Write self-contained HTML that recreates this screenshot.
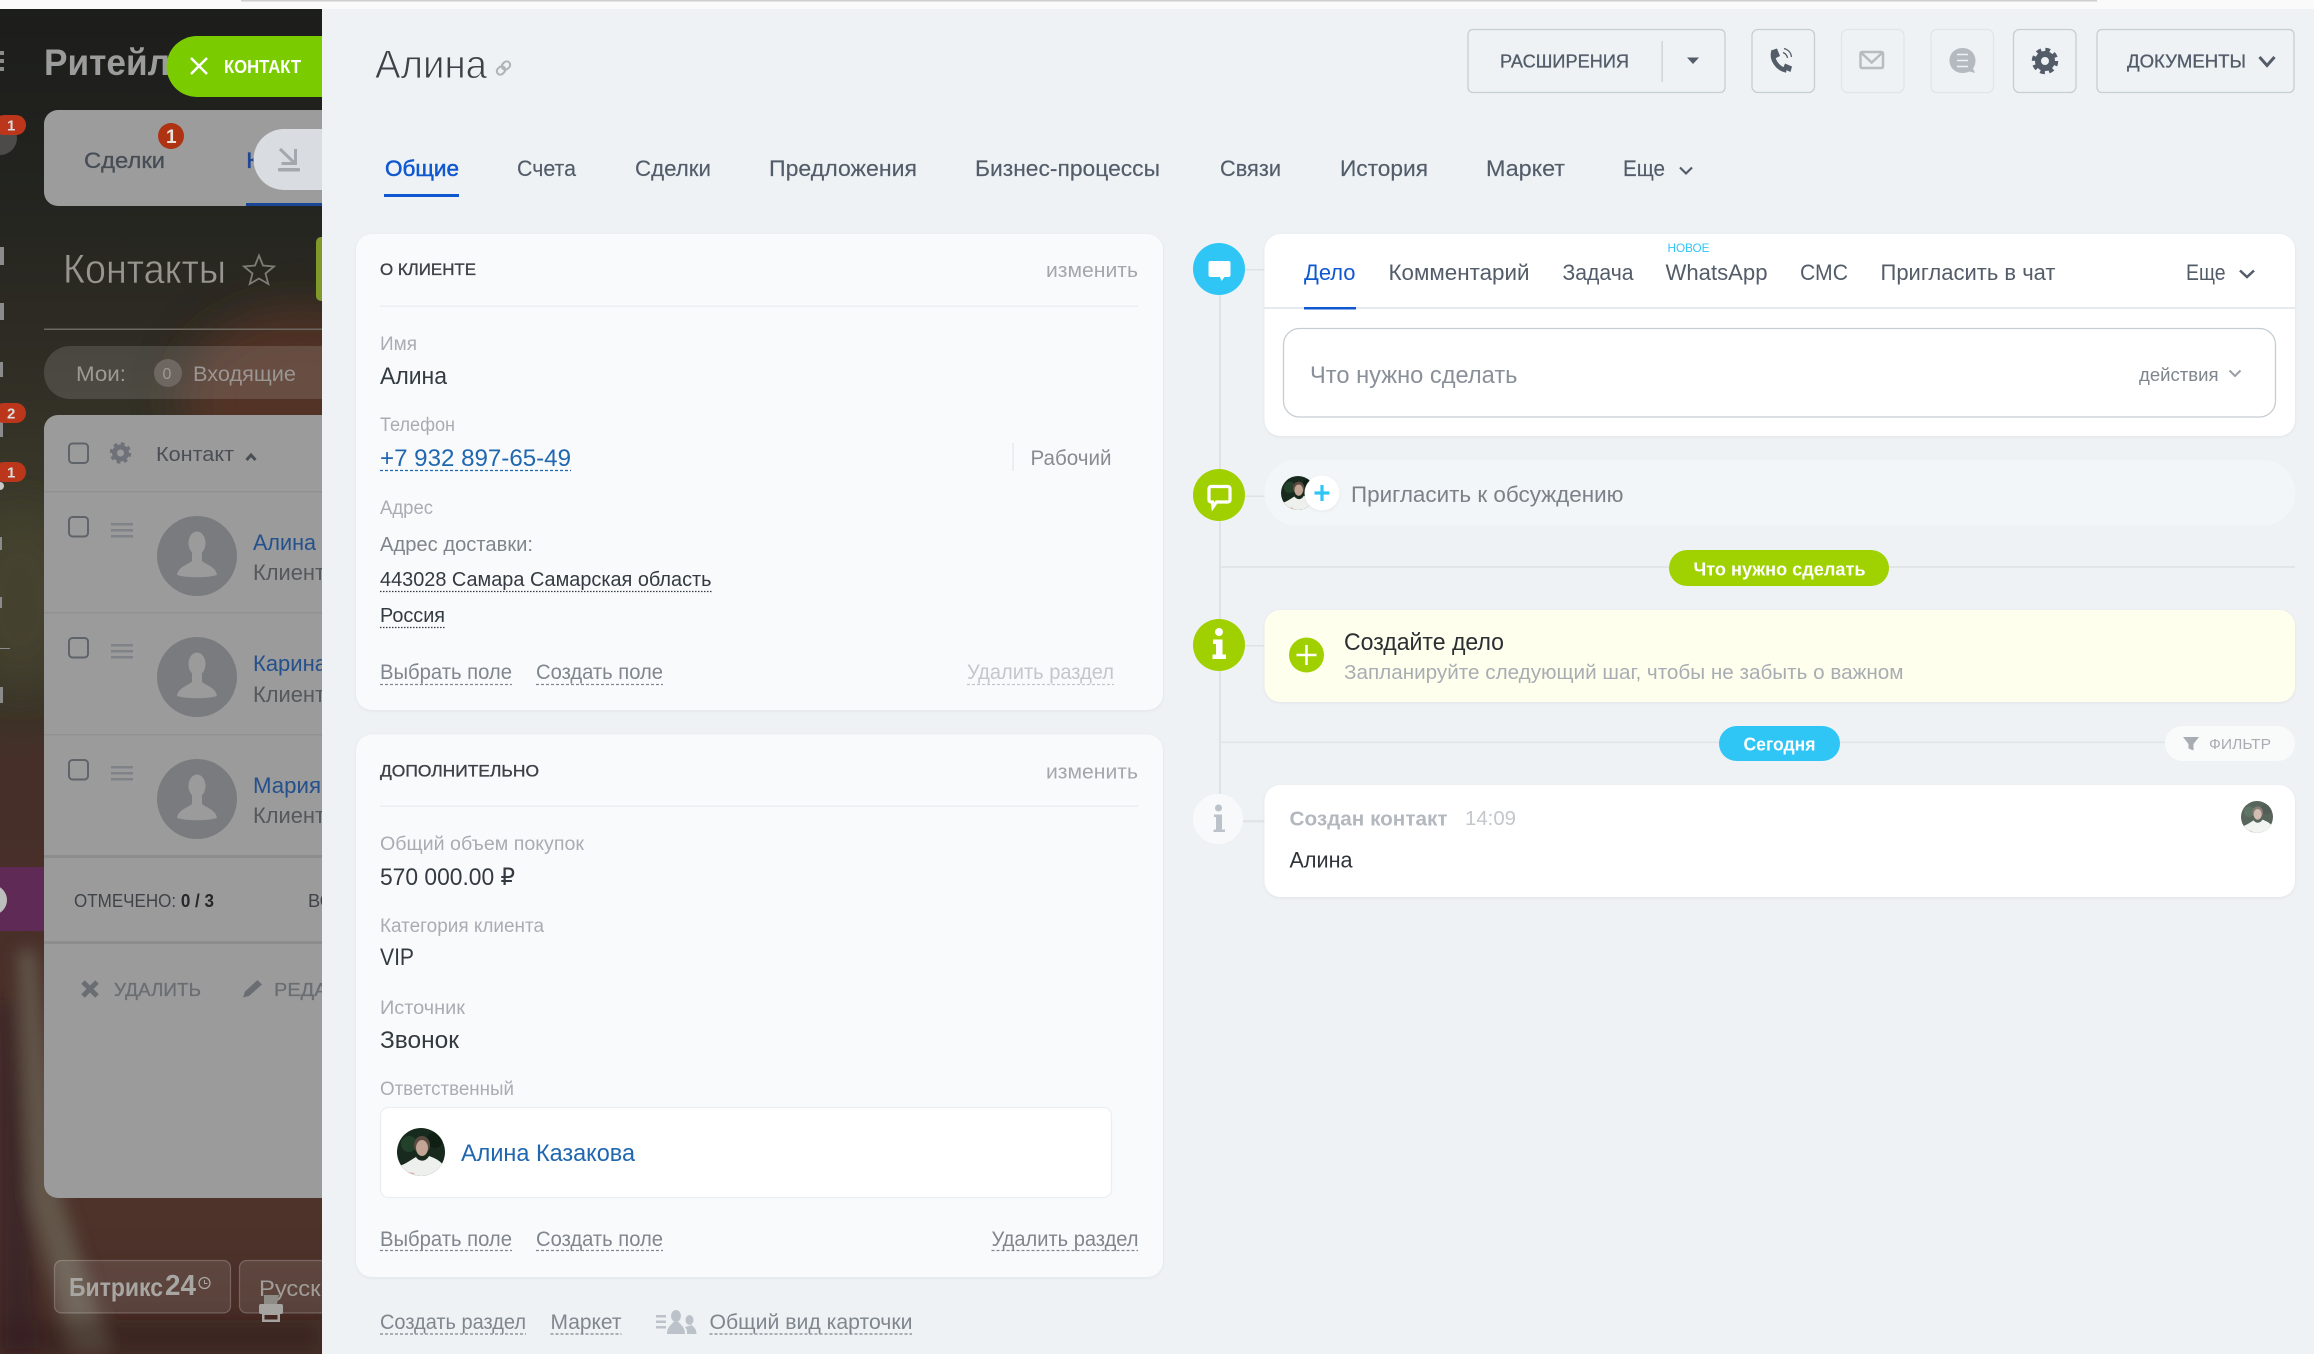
<!DOCTYPE html>
<html lang="ru">
<head>
<meta charset="utf-8">
<title>Алина</title>
<style>
html,body{margin:0;padding:0;width:2314px;height:1354px;overflow:hidden;background:#eef2f5}
svg{display:block}
text{font-family:"Liberation Sans","DejaVu Sans",sans-serif;white-space:pre}
</style>
</head>
<body>
<svg xmlns="http://www.w3.org/2000/svg" width="2314" height="1354" viewBox="0 0 2314 1354">
<defs>
<linearGradient id="bgv" x1="0" y1="0" x2="0" y2="1">
<stop offset="0" stop-color="#1c1d1b"/>
<stop offset=".14" stop-color="#23241f"/>
<stop offset=".26" stop-color="#2f2c24"/>
<stop offset=".38" stop-color="#3b3a2a"/>
<stop offset=".52" stop-color="#3a3528"/>
<stop offset=".56" stop-color="#462f29"/>
<stop offset=".75" stop-color="#4a3029"/>
<stop offset=".9" stop-color="#4e332b"/>
<stop offset="1" stop-color="#462c25"/>
</linearGradient>
<filter id="bl" x="-50%" y="-50%" width="200%" height="200%"><feGaussianBlur stdDeviation="22"/></filter>
<filter id="bl2" x="-50%" y="-50%" width="200%" height="200%"><feGaussianBlur stdDeviation="8"/></filter>
<filter id="sh" x="-5%" y="-5%" width="110%" height="110%"><feDropShadow dx="0" dy="1" stdDeviation="1.5" flood-color="#000" flood-opacity=".06"/></filter>
<clipPath id="avc"><circle cx="0" cy="0" r="24"/></clipPath>
<symbol id="av" viewBox="-24 -24 48 48" overflow="visible">
<g clip-path="url(#avc)">
<rect x="-24" y="-24" width="48" height="48" fill="#172a1d"/>
<circle cx="-12" cy="-8" r="8" fill="#23402a"/>
<circle cx="14" cy="-12" r="8" fill="#0f1f14"/>
<ellipse cx="1" cy="-7" rx="8" ry="9" fill="#5b4a40"/>
<ellipse cx="1" cy="-4" rx="6" ry="8" fill="#c3a595"/>
<path d="M-5 5C-2 10 5 10 8 4C13 6 20 8 24 16V24H-24V14C-18 14-12 9-5 5Z" fill="#eef0ee"/>
<path d="M-22 19L-6 21-9 24H-24Z" fill="#d9b8aa"/>
</g>
</symbol>
</defs>

<!-- background -->
<rect width="2314" height="1354" fill="url(#bgv)"/>
<g filter="url(#bl)">
<ellipse cx="300" cy="400" rx="120" ry="90" fill="#5a3424" opacity=".8"/>
<ellipse cx="20" cy="600" rx="60" ry="90" fill="#4c4a30" opacity=".6"/>
</g>
<g filter="url(#bl2)">
<path d="M18 950L36 950 62 1200 112 1354 72 1354 30 1200Z" fill="#736f60" opacity=".6"/>
<path d="M0 1000L14 1000 40 1354 0 1354Z" fill="#33202a" opacity=".6"/>
<path d="M0 1320H320V1354H0Z" fill="#2e1e1a" opacity=".35"/>
</g>
<rect x="0" y="867" width="44" height="64" fill="#5f2a55"/>
<rect x="0" y="0" width="2314" height="9" fill="#fafafa"/>
<rect x="241" y="0" width="1856" height="1.5" fill="#cfcfcf"/>

<!-- left edge fragments -->
<g fill="#8b8b8b">
<rect x="0" y="51" width="4" height="4"/><rect x="0" y="59" width="4" height="4"/><rect x="0" y="67" width="4" height="4"/>
<rect x="0" y="247" width="4" height="18"/><rect x="0" y="303" width="4" height="17"/><rect x="0" y="362" width="3" height="15"/>
<rect x="0" y="422" width="3" height="15"/><rect x="0" y="537" width="2" height="13"/><rect x="0" y="597" width="2" height="11"/>
<rect x="0" y="648" width="10" height="1"/><rect x="0" y="687" width="3" height="16"/>
</g>
<circle cx="0" cy="138" r="17" fill="#4c4b49"/>
<circle cx="0" cy="486" r="4" fill="#c7c7c7"/>
<circle cx="-8" cy="900" r="15" fill="#bdbdbd"/>
<g fill="#bb361b">
<rect x="-6" y="115" width="32" height="20" rx="10"/>
<rect x="-6" y="403" width="32" height="20" rx="10"/>
<rect x="-6" y="462" width="32" height="20" rx="10"/>
</g>
<g fill="#ddd" font-size="15" font-weight="700">
<text x="7" y="130.500">1</text><text x="7" y="418.500">2</text><text x="7" y="477.500">1</text>
</g>

<!-- header left -->
<text x="44" y="75" font-size="37" font-weight="700" fill="#9b9c9b" textLength="126" lengthAdjust="spacingAndGlyphs">Ритейл</text>

<!-- deals tab strip -->
<rect x="44" y="110" width="300" height="96" rx="14" fill="#9c9c9c"/>
<text x="84" y="168" font-size="22" fill="#474d55" stroke="#474d55" stroke-width=".3" textLength="81" lengthAdjust="spacingAndGlyphs">Сделки</text>
<circle cx="171" cy="136" r="13" fill="#ae3312"/>
<text x="166" y="143" font-size="19" font-weight="700" fill="#e9e2de">1</text>
<text x="246" y="168" font-size="22" fill="#1b4596" stroke="#1b4596" stroke-width=".3" textLength="110" lengthAdjust="spacingAndGlyphs">Контакты</text>
<rect x="246" y="203" width="90" height="3" fill="#1b4596"/>

<!-- Контакты -->
<text x="63" y="283" font-size="41" fill="#97958f" stroke="#2d2a23" stroke-width=".6" textLength="163" lengthAdjust="spacingAndGlyphs">Контакты</text>
<path d="M259 255.500L263 265.500 274 266.500 265.500 273.500 268.300 284 259 278.500 249.700 284 252.500 273.500 244 266.500 255 265.500Z" fill="none" stroke="#7d7c76" stroke-width="1.800"/>
<rect x="316" y="237" width="20" height="64" rx="5" fill="#7f9a2a"/>
<rect x="44" y="328.500" width="290" height="1.500" fill="#6c685f"/>

<!-- filter pill -->
<rect x="44" y="346" width="320" height="53" rx="26" fill="#fff" opacity=".13"/>
<text x="76" y="381" font-size="21" fill="#9c9a96" textLength="50" lengthAdjust="spacingAndGlyphs">Мои:</text>
<circle cx="168" cy="373" r="14" fill="#6e6761"/>
<text x="162.500" y="379" font-size="16" fill="#9d9995">0</text>
<text x="193" y="381" font-size="21" fill="#9a9692" textLength="103" lengthAdjust="spacingAndGlyphs">Входящие</text>

<!-- grid -->
<rect x="44" y="415" width="320" height="783" rx="14" fill="#9b9b9b"/>
<rect x="69" y="443.500" width="19" height="19.500" rx="3.500" fill="none" stroke="#5f636a" stroke-width="2"/>
<g transform="translate(120.500 453)" fill="none" stroke="#6e7278">
<circle r="6" stroke-width="5"/><circle r="9" stroke-width="3.500" stroke-dasharray="3.600 3.470"/>
</g>
<text x="156" y="461" font-size="20" fill="#4b4f55" textLength="78" lengthAdjust="spacingAndGlyphs">Контакт</text>
<path d="M246.500 460L251 455 255.500 460" fill="none" stroke="#4b4f55" stroke-width="3"/>
<rect x="44" y="491" width="300" height="1.500" fill="#919191"/>
<rect x="44" y="612" width="300" height="1.500" fill="#919191"/>
<rect x="44" y="734" width="300" height="1.500" fill="#919191"/>
<rect x="44" y="855" width="300" height="3" fill="#8d8d8d"/>
<rect x="44" y="941" width="300" height="3" fill="#8d8d8d"/>

<g id="rows">
<rect x="69" y="517" width="19" height="19.500" rx="3.500" fill="none" stroke="#5f636a" stroke-width="2"/>
<rect x="69" y="638" width="19" height="19.500" rx="3.500" fill="none" stroke="#5f636a" stroke-width="2"/>
<rect x="69" y="760" width="19" height="19.500" rx="3.500" fill="none" stroke="#5f636a" stroke-width="2"/>
<g fill="#7f8388">
<rect x="111" y="523" width="22" height="2.500"/><rect x="111" y="529" width="22" height="2.500"/><rect x="111" y="535" width="22" height="2.500"/>
<rect x="111" y="644" width="22" height="2.500"/><rect x="111" y="650" width="22" height="2.500"/><rect x="111" y="656" width="22" height="2.500"/>
<rect x="111" y="766" width="22" height="2.500"/><rect x="111" y="772" width="22" height="2.500"/><rect x="111" y="778" width="22" height="2.500"/>
</g>
<g transform="translate(197 556)"><circle r="40" fill="#797b7f"/><ellipse cy="-13" rx="8.500" ry="11.500" fill="#9b9b9b"/><path d="M-20 19C-19 11-10 9-5 5L-5 -3H5L5 5C10 9 19 11 20 19 10 22-10 22-20 19Z" fill="#9b9b9b"/></g>
<g transform="translate(197 677)"><circle r="40" fill="#797b7f"/><ellipse cy="-13" rx="8.500" ry="11.500" fill="#9b9b9b"/><path d="M-20 19C-19 11-10 9-5 5L-5 -3H5L5 5C10 9 19 11 20 19 10 22-10 22-20 19Z" fill="#9b9b9b"/></g>
<g transform="translate(197 799)"><circle r="40" fill="#797b7f"/><ellipse cy="-13" rx="8.500" ry="11.500" fill="#9b9b9b"/><path d="M-20 19C-19 11-10 9-5 5L-5 -3H5L5 5C10 9 19 11 20 19 10 22-10 22-20 19Z" fill="#9b9b9b"/></g>
<text x="253" y="550" font-size="22" fill="#24508c" textLength="63" lengthAdjust="spacingAndGlyphs">Алина</text>
<text x="253" y="580" font-size="22" fill="#55585c" textLength="72" lengthAdjust="spacingAndGlyphs">Клиент</text>
<text x="253" y="671" font-size="22" fill="#24508c" textLength="74" lengthAdjust="spacingAndGlyphs">Карина</text>
<text x="253" y="702" font-size="22" fill="#55585c" textLength="72" lengthAdjust="spacingAndGlyphs">Клиент</text>
<text x="253" y="793" font-size="22" fill="#24508c" textLength="68" lengthAdjust="spacingAndGlyphs">Мария</text>
<text x="253" y="823" font-size="22" fill="#55585c" textLength="72" lengthAdjust="spacingAndGlyphs">Клиент</text>
</g>
<text x="74" y="907" font-size="18" fill="#3f4348" textLength="140" lengthAdjust="spacingAndGlyphs">ОТМЕЧЕНО: <tspan font-weight="700" fill="#26282b">0 / 3</tspan></text>
<text x="308" y="907" font-size="18" fill="#3f4348" textLength="60" lengthAdjust="spacingAndGlyphs">ВСЕГО</text>
<path d="M83 982L97 996M97 982L83 996" stroke="#6a6e73" stroke-width="5" fill="none"/>
<text x="114" y="996" font-size="18" fill="#6a6e73" stroke="#6a6e73" stroke-width=".3" textLength="87" lengthAdjust="spacingAndGlyphs">УДАЛИТЬ</text>
<path d="M257.500 980L262 984.500 249 996 243 997.500 245 991.500Z" fill="#6a6e73"/>
<text x="274" y="996" font-size="18" fill="#6a6e73" stroke="#6a6e73" stroke-width=".3" textLength="170" lengthAdjust="spacingAndGlyphs">РЕДАКТИРОВАТЬ</text>

<!-- footer left -->
<rect x="54.500" y="1260.500" width="176" height="52.500" rx="7" fill="#fff" fill-opacity=".1" stroke="#fff" stroke-opacity=".22" stroke-width="1.200"/>
<text x="69" y="1296" font-size="26" font-weight="700" fill="#a8a6a3" textLength="94" lengthAdjust="spacingAndGlyphs">Битрикс</text>
<text x="165" y="1295" font-size="29" font-weight="700" fill="#a8a6a3" textLength="31" lengthAdjust="spacingAndGlyphs">24</text>
<circle cx="204.500" cy="1283" r="5.500" fill="none" stroke="#a8a6a3" stroke-width="1.300"/>
<path d="M204.500 1280V1283.500H207.500" fill="none" stroke="#a8a6a3" stroke-width="1"/>
<rect x="239.500" y="1260.500" width="110" height="52.500" rx="7" fill="#fff" fill-opacity=".1" stroke="#fff" stroke-opacity=".22" stroke-width="1.200"/>
<text x="259" y="1296" font-size="22" fill="#a09d99" textLength="88" lengthAdjust="spacingAndGlyphs">Русский</text>
<g fill="#a6a4a1">
<path d="M264 1295h15l-2 9h-13z" fill="#8f8c88"/>
<rect x="259" y="1304" width="24" height="10" rx="2"/>
<path d="M262 1313h18v9h-18zM264.500 1315v4.500h13v-4.500z" fill-rule="evenodd"/>
</g>

<!-- green / light buttons -->
<path d="M197 36H340V97H197A30.500 30.500 0 0 1 197 36Z" fill="#7acc00"/>
<path d="M191 58L207 74M207 58L191 74" stroke="#fff" stroke-width="2.500" fill="none"/>
<text x="224" y="73" font-size="18" font-weight="700" fill="#fff" textLength="77" lengthAdjust="spacingAndGlyphs">КОНТАКТ</text>
<path d="M284 129H340V190H284A30.500 30.500 0 0 1 284 129Z" fill="#d9dce0"/>
<path d="M295.500 149V163.500H281.500M280 149L295 163.500" fill="none" stroke="#a2a8ae" stroke-width="3"/>
<rect x="278" y="168" width="22" height="3.500" rx="1" fill="#a2a8ae"/>

<!-- right panel -->
<rect x="322" y="9" width="1992" height="1345" fill="#eef2f5"/>

<!-- title -->
<text x="375" y="78" font-size="40" fill="#3d4248" stroke="#eef2f5" stroke-width=".9" textLength="112" lengthAdjust="spacingAndGlyphs">Алина</text>
<g transform="translate(503.500 68) rotate(-45)" fill="none" stroke="#aeb3b8" stroke-width="2">
<rect x="-8" y="-3.500" width="9" height="7" rx="3.500"/><rect x="-1" y="-3.500" width="9" height="7" rx="3.500"/>
</g>

<!-- tabs -->
<g font-size="22" fill="#535c69" stroke="#535c69" stroke-width=".15">
<text x="385" y="176" fill="#1058d0" stroke="#1058d0" stroke-width=".5" textLength="74" lengthAdjust="spacingAndGlyphs">Общие</text>
<text x="517" y="176" textLength="59" lengthAdjust="spacingAndGlyphs">Счета</text>
<text x="635" y="176" textLength="76" lengthAdjust="spacingAndGlyphs">Сделки</text>
<text x="769" y="176" textLength="148" lengthAdjust="spacingAndGlyphs">Предложения</text>
<text x="975" y="176" textLength="185" lengthAdjust="spacingAndGlyphs">Бизнес-процессы</text>
<text x="1220" y="176" textLength="61" lengthAdjust="spacingAndGlyphs">Связи</text>
<text x="1340" y="176" textLength="88" lengthAdjust="spacingAndGlyphs">История</text>
<text x="1486" y="176" textLength="79" lengthAdjust="spacingAndGlyphs">Маркет</text>
<text x="1623" y="176" textLength="42" lengthAdjust="spacingAndGlyphs">Еще</text>
</g>
<path d="M1680 167.500L1686 173.500 1692 167.500" fill="none" stroke="#535c69" stroke-width="2.200"/>
<rect x="384" y="194" width="75" height="3" fill="#1058d0"/>

<!-- top buttons -->
<g fill="none" stroke-width="1.300">
<rect x="1468" y="29.500" width="257" height="63" rx="5" stroke="#c6cdd3"/>
<rect x="1752" y="29.500" width="62.500" height="63" rx="6" stroke="#c6cdd3"/>
<rect x="1841.500" y="29.500" width="62.500" height="63" rx="6" stroke="#e2e5e8"/>
<rect x="1931" y="29.500" width="62.500" height="63" rx="6" stroke="#e2e5e8"/>
<rect x="2013.500" y="29.500" width="62.500" height="63" rx="6" stroke="#c6cdd3"/>
<rect x="2097" y="29.500" width="197" height="63" rx="5" stroke="#c6cdd3"/>
</g>
<text x="1500" y="67.500" font-size="18" fill="#535c69" stroke="#535c69" stroke-width=".3" textLength="129" lengthAdjust="spacingAndGlyphs">РАСШИРЕНИЯ</text>
<rect x="1661.500" y="41" width="1.200" height="41" fill="#c6cdd3"/>
<path d="M1687 57.500H1699L1693 64Z" fill="#535c69"/>
<!-- phone -->
<path d="M1773.500 51C1771 59 1777 68.500 1786.500 70.500" fill="none" stroke="#535c69" stroke-width="4.500"/>
<path d="M1771 50.500L1777 48.500 1780 56 1775 58.500ZM1790.500 72L1792 66.500 1785 63.500 1783 68.500Z" fill="#535c69"/>
<path d="M1783 52.500C1785.500 53.500 1787 55 1787.500 58M1784 48.500C1788 49.500 1791 52.500 1791.500 57" fill="none" stroke="#535c69" stroke-width="1.300"/>
<!-- mail -->
<rect x="1860.500" y="52" width="22.500" height="16" rx="1.500" fill="none" stroke="#b7bcc1" stroke-width="2.500"/>
<path d="M1861.500 53L1871.700 62.500 1882 53" fill="none" stroke="#b7bcc1" stroke-width="2.500"/>
<!-- chat -->
<path d="M1962.500 48C1970 48 1975.500 53.500 1975.500 60.500 1975.500 63.500 1974.500 66.500 1973 68.500L1975 73 1969.500 71.500C1967.500 72.500 1965 73 1962.500 73 1955 73 1949.500 67.500 1949.500 60.500S1955 48 1962.500 48Z" fill="#b4bac0"/>
<path d="M1957 54.500H1968M1957 60.500H1968M1957 66.500H1968" stroke="#eef2f5" stroke-width="1.500" fill="none"/>
<!-- gear -->
<g transform="translate(2045 61)" fill="none" stroke="#535c69">
<circle r="7" stroke-width="6"/><circle r="11" stroke-width="4.500" stroke-dasharray="4.600 4.040"/>
</g>
<text x="2127" y="67.500" font-size="18" fill="#535c69" stroke="#535c69" stroke-width=".3" textLength="119" lengthAdjust="spacingAndGlyphs">ДОКУМЕНТЫ</text>
<path d="M2259.500 57L2267 65.500 2274.500 57" fill="none" stroke="#535c69" stroke-width="3"/>

<!-- card 1 -->
<rect x="356" y="234" width="807" height="476" rx="16" fill="#f9fafc" filter="url(#sh)"/>
<text x="380" y="275" font-size="17" fill="#3c4147" stroke="#3c4147" stroke-width=".35" textLength="96" lengthAdjust="spacingAndGlyphs">О КЛИЕНТЕ</text>
<text x="1046" y="277" font-size="20" fill="#a3a7ab" textLength="92" lengthAdjust="spacingAndGlyphs">изменить</text>
<rect x="380" y="305.500" width="758" height="1.300" fill="#e9ecef"/>
<text x="380" y="350" font-size="19" fill="#a8adb3" textLength="37" lengthAdjust="spacingAndGlyphs">Имя</text>
<text x="380" y="384" font-size="24" fill="#333a41" textLength="67" lengthAdjust="spacingAndGlyphs">Алина</text>
<text x="380" y="431" font-size="19" fill="#a8adb3" textLength="75" lengthAdjust="spacingAndGlyphs">Телефон</text>
<text x="380" y="466" font-size="24" fill="#2067b0" textLength="191" lengthAdjust="spacingAndGlyphs">+7 932 897-65-49</text>
<path d="M380 470.500H571" stroke="#2067b0" stroke-width="1.300" stroke-dasharray="3 2" fill="none"/>
<rect x="1012.500" y="443" width="1.200" height="28" fill="#e4e7ea"/>
<text x="1030.500" y="465" font-size="21" fill="#878c91" textLength="81" lengthAdjust="spacingAndGlyphs">Рабочий</text>
<text x="380" y="514" font-size="19" fill="#a8adb3" textLength="53" lengthAdjust="spacingAndGlyphs">Адрес</text>
<text x="380" y="551" font-size="20.500" fill="#7f858c" textLength="153" lengthAdjust="spacingAndGlyphs">Адрес доставки:</text>
<text x="380" y="586" font-size="20.500" fill="#333a41" textLength="331.500" lengthAdjust="spacingAndGlyphs">443028 Самара Самарская область</text>
<path d="M380 591.500H712" stroke="#333a41" stroke-width="1.200" stroke-dasharray="1.500 1.500" fill="none"/>
<text x="380" y="622" font-size="20.500" fill="#333a41" textLength="65" lengthAdjust="spacingAndGlyphs">Россия</text>
<path d="M380 627.500H445" stroke="#333a41" stroke-width="1.200" stroke-dasharray="1.500 1.500" fill="none"/>
<text x="380" y="679" font-size="21" fill="#80868e" textLength="132" lengthAdjust="spacingAndGlyphs">Выбрать поле</text>
<path d="M380 684.500H512" stroke="#80868e" stroke-width="1.200" stroke-dasharray="3 2" fill="none"/>
<text x="536" y="679" font-size="21" fill="#80868e" textLength="127" lengthAdjust="spacingAndGlyphs">Создать поле</text>
<path d="M536 684.500H663" stroke="#80868e" stroke-width="1.200" stroke-dasharray="3 2" fill="none"/>
<text x="967" y="679" font-size="21" fill="#c3c7cb" textLength="147" lengthAdjust="spacingAndGlyphs">Удалить раздел</text>
<path d="M967 684.500H1114" stroke="#c3c7cb" stroke-width="1.200" stroke-dasharray="3 2" fill="none"/>

<!-- card 2 -->
<rect x="356" y="734.500" width="807" height="542.500" rx="16" fill="#f9fafc" filter="url(#sh)"/>
<text x="380" y="776.500" font-size="17" fill="#3c4147" stroke="#3c4147" stroke-width=".35" textLength="159" lengthAdjust="spacingAndGlyphs">ДОПОЛНИТЕЛЬНО</text>
<text x="1046" y="778.500" font-size="20" fill="#a3a7ab" textLength="92" lengthAdjust="spacingAndGlyphs">изменить</text>
<rect x="380" y="805.500" width="758" height="1.300" fill="#e9ecef"/>
<text x="380" y="850" font-size="19" fill="#a8adb3" textLength="204" lengthAdjust="spacingAndGlyphs">Общий объем покупок</text>
<text x="380" y="885" font-size="24" fill="#333a41" textLength="135" lengthAdjust="spacingAndGlyphs">570 000.00 ₽</text>
<text x="380" y="932" font-size="19" fill="#a8adb3" textLength="164" lengthAdjust="spacingAndGlyphs">Категория клиента</text>
<text x="380" y="965" font-size="24" fill="#333a41" textLength="34" lengthAdjust="spacingAndGlyphs">VIP</text>
<text x="380" y="1014" font-size="19" fill="#a8adb3" textLength="85" lengthAdjust="spacingAndGlyphs">Источник</text>
<text x="380" y="1048" font-size="24" fill="#333a41" textLength="79" lengthAdjust="spacingAndGlyphs">Звонок</text>
<text x="380" y="1095" font-size="19" fill="#a8adb3" textLength="134" lengthAdjust="spacingAndGlyphs">Ответственный</text>
<rect x="380.500" y="1107.500" width="731" height="90" rx="8" fill="#fff" stroke="#eceff1" stroke-width="1.300"/>
<use href="#av" x="397" y="1128" width="48" height="48"/>
<text x="461" y="1161" font-size="24" fill="#2067b0" textLength="174" lengthAdjust="spacingAndGlyphs">Алина Казакова</text>
<text x="380" y="1246" font-size="21" fill="#80868e" textLength="132" lengthAdjust="spacingAndGlyphs">Выбрать поле</text>
<path d="M380 1250.500H512" stroke="#80868e" stroke-width="1.200" stroke-dasharray="3 2" fill="none"/>
<text x="536" y="1246" font-size="21" fill="#80868e" textLength="127" lengthAdjust="spacingAndGlyphs">Создать поле</text>
<path d="M536 1250.500H663" stroke="#80868e" stroke-width="1.200" stroke-dasharray="3 2" fill="none"/>
<text x="991.500" y="1246" font-size="21" fill="#80868e" textLength="147" lengthAdjust="spacingAndGlyphs">Удалить раздел</text>
<path d="M991.500 1250.500H1138" stroke="#80868e" stroke-width="1.200" stroke-dasharray="3 2" fill="none"/>

<!-- bottom links -->
<text x="380" y="1329" font-size="21" fill="#80868e" textLength="146" lengthAdjust="spacingAndGlyphs">Создать раздел</text>
<path d="M380 1334H526" stroke="#80868e" stroke-width="1.200" stroke-dasharray="3 2" fill="none"/>
<text x="550.500" y="1329" font-size="21" fill="#80868e" textLength="71" lengthAdjust="spacingAndGlyphs">Маркет</text>
<path d="M550.500 1334H621.500" stroke="#80868e" stroke-width="1.200" stroke-dasharray="3 2" fill="none"/>
<g fill="#bcc2c9">
<rect x="656" y="1315" width="10" height="2.500"/><rect x="656" y="1320.500" width="10" height="2.500"/><rect x="656" y="1326" width="10" height="2.500"/>
<ellipse cx="676" cy="1316" rx="5" ry="6"/>
<path d="M667 1334C667 1327 671 1325 673.500 1322H678.500C681 1325 685 1327 685 1334Z"/>
<ellipse cx="689.500" cy="1320" rx="4" ry="5"/>
<path d="M687 1334V1331C687 1329 685 1328 685 1327L692 1325C693 1327 696.500 1328 696.500 1334Z"/>
</g>
<text x="709.500" y="1329" font-size="21" fill="#80868e" textLength="203" lengthAdjust="spacingAndGlyphs">Общий вид карточки</text>
<path d="M709.500 1334H912" stroke="#80868e" stroke-width="1.200" stroke-dasharray="3 2" fill="none"/>

<!-- timeline lines -->
<rect x="1219" y="290" width="2" height="510" fill="#dfe3e7"/>
<rect x="1245" y="269" width="20" height="1.500" fill="#dfe3e7"/>
<rect x="1245" y="495.500" width="20" height="1.500" fill="#dfe3e7"/>
<rect x="1245" y="645" width="20" height="1.500" fill="#dfe3e7"/>
<rect x="1243" y="820" width="22" height="2.500" fill="#e1e5e8"/>
<rect x="1221" y="566" width="1074" height="2" fill="#e1e5e8"/>
<rect x="1221" y="741.500" width="944" height="1.700" fill="#e1e5e8"/>

<!-- composer card -->
<rect x="1264.500" y="234" width="1030.500" height="202" rx="16" fill="#fff" filter="url(#sh)"/>
<rect x="1264.500" y="307" width="1030.500" height="2" fill="#e6e9ed"/>
<rect x="1304" y="307" width="52" height="2.500" fill="#1058d0"/>
<g font-size="22" fill="#535c69">
<text x="1304" y="280" fill="#1058d0" textLength="51.500" lengthAdjust="spacingAndGlyphs">Дело</text>
<text x="1388.500" y="280" textLength="141" lengthAdjust="spacingAndGlyphs">Комментарий</text>
<text x="1562.500" y="280" textLength="71" lengthAdjust="spacingAndGlyphs">Задача</text>
<text x="1665.500" y="280" textLength="102" lengthAdjust="spacingAndGlyphs">WhatsApp</text>
<text x="1800" y="280" textLength="48" lengthAdjust="spacingAndGlyphs">СМС</text>
<text x="1880.500" y="280" textLength="175" lengthAdjust="spacingAndGlyphs">Пригласить в чат</text>
<text x="2186" y="280" textLength="39.500" lengthAdjust="spacingAndGlyphs">Еще</text>
</g>
<text x="1667.500" y="252" font-size="12" fill="#2fc6f6" textLength="42" lengthAdjust="spacingAndGlyphs">НОВОЕ</text>
<path d="M2240 270.500L2247 277 2254 270.500" fill="none" stroke="#535c69" stroke-width="2.500"/>
<rect x="1283.500" y="328.500" width="992" height="88.500" rx="16" fill="#fff" stroke="#c6cdd3" stroke-width="1.300"/>
<text x="1310" y="383" font-size="24" fill="#8a9099" textLength="207.500" lengthAdjust="spacingAndGlyphs">Что нужно сделать</text>
<text x="2139" y="381" font-size="18" fill="#7f858c" textLength="79.500" lengthAdjust="spacingAndGlyphs">действия</text>
<path d="M2229.500 370.500L2235 376 2240.500 370.500" fill="none" stroke="#999ea4" stroke-width="2"/>

<!-- blue circle -->
<circle cx="1219" cy="269" r="26" fill="#2fc6f6"/>
<path d="M1210.500 261H1228.500A2 2 0 0 1 1230.500 263V275A2 2 0 0 1 1228.500 277H1224.500L1221.500 281 1220 277H1210.500A2 2 0 0 1 1208.500 275V263A2 2 0 0 1 1210.500 261Z" fill="#fff"/>

<!-- invite pill -->
<rect x="1264.500" y="460" width="1030.500" height="65.500" rx="32" fill="#f3f6f8"/>
<circle cx="1219" cy="495" r="26" fill="#a0d000"/>
<path d="M1211 486.500H1228A2 2 0 0 1 1230 488.500V500A2 2 0 0 1 1228 502H1216.500L1213 507 1212.500 502H1211A2 2 0 0 1 1209 500V488.500A2 2 0 0 1 1211 486.500Z" fill="none" stroke="#fff" stroke-width="3.200"/>
<use href="#av" x="1281" y="476" width="34" height="34"/>
<circle cx="1322" cy="493" r="17.500" fill="#fff" filter="url(#sh)"/>
<path d="M1322 485V501M1314.500 493H1329.500" stroke="#2fc6f6" stroke-width="3.200" fill="none"/>
<text x="1351" y="502" font-size="22" fill="#7b8188" textLength="272.500" lengthAdjust="spacingAndGlyphs">Пригласить к обсуждению</text>

<!-- green pill -->
<rect x="1669" y="550" width="220" height="36" rx="18" fill="#a0d100"/>
<text x="1693.500" y="575.500" font-size="18" font-weight="700" fill="#fff" textLength="172" lengthAdjust="spacingAndGlyphs">Что нужно сделать</text>

<!-- create task -->
<rect x="1264.500" y="610" width="1030.500" height="92" rx="16" fill="#ffffee" filter="url(#sh)"/>
<circle cx="1219" cy="645" r="26" fill="#a0d000"/>
<circle cx="1219" cy="632" r="4" fill="#fff"/>
<path d="M1213 639.500H1222.500V654.500H1226V659H1212.500V654.500H1216V644H1213Z" fill="#fff"/>
<circle cx="1306.500" cy="655" r="17.500" fill="#a0d000"/>
<path d="M1306.500 645V665M1296.500 655H1316.500" stroke="#fff" stroke-width="2.500" fill="none"/>
<text x="1344" y="650" font-size="24" fill="#2b2f33" textLength="160" lengthAdjust="spacingAndGlyphs">Создайте дело</text>
<text x="1344" y="679" font-size="20" fill="#a8adb3" textLength="559.500" lengthAdjust="spacingAndGlyphs">Запланируйте следующий шаг, чтобы не забыть о важном</text>

<!-- today -->
<rect x="1719" y="726" width="121" height="35" rx="17.500" fill="#2fc6f6"/>
<text x="1743.500" y="750.500" font-size="18" font-weight="700" fill="#fff" textLength="72" lengthAdjust="spacingAndGlyphs">Сегодня</text>
<rect x="2165" y="726" width="130" height="35" rx="17.500" fill="#f9fbfb"/>
<path d="M2183 737H2199L2193.500 744V750.500L2188.500 748.500V744Z" fill="#a8adb3"/>
<text x="2209" y="749" font-size="15" fill="#a8adb3" textLength="62" lengthAdjust="spacingAndGlyphs">ФИЛЬТР</text>

<!-- created -->
<circle cx="1218" cy="819" r="25" fill="#f8f9fb"/>
<circle cx="1218.500" cy="808" r="3.500" fill="#bcc2c9"/>
<path d="M1214 814.500H1222V829.500H1225V832H1213.500V829.500H1216V817H1214Z" fill="#bcc2c9"/>
<rect x="1264.500" y="785" width="1030.500" height="112" rx="16" fill="#fff" filter="url(#sh)"/>
<text x="1289.500" y="825.500" font-size="20" font-weight="700" fill="#b3b8be" textLength="158" lengthAdjust="spacingAndGlyphs">Создан контакт</text>
<text x="1465" y="825" font-size="20" fill="#c3c7cb" textLength="51" lengthAdjust="spacingAndGlyphs">14:09</text>
<text x="1289.500" y="867.500" font-size="22" fill="#2f3439" textLength="63" lengthAdjust="spacingAndGlyphs">Алина</text>
<use href="#av" x="2241" y="801" width="32" height="32" opacity=".72"/>
</svg>
</body>
</html>
